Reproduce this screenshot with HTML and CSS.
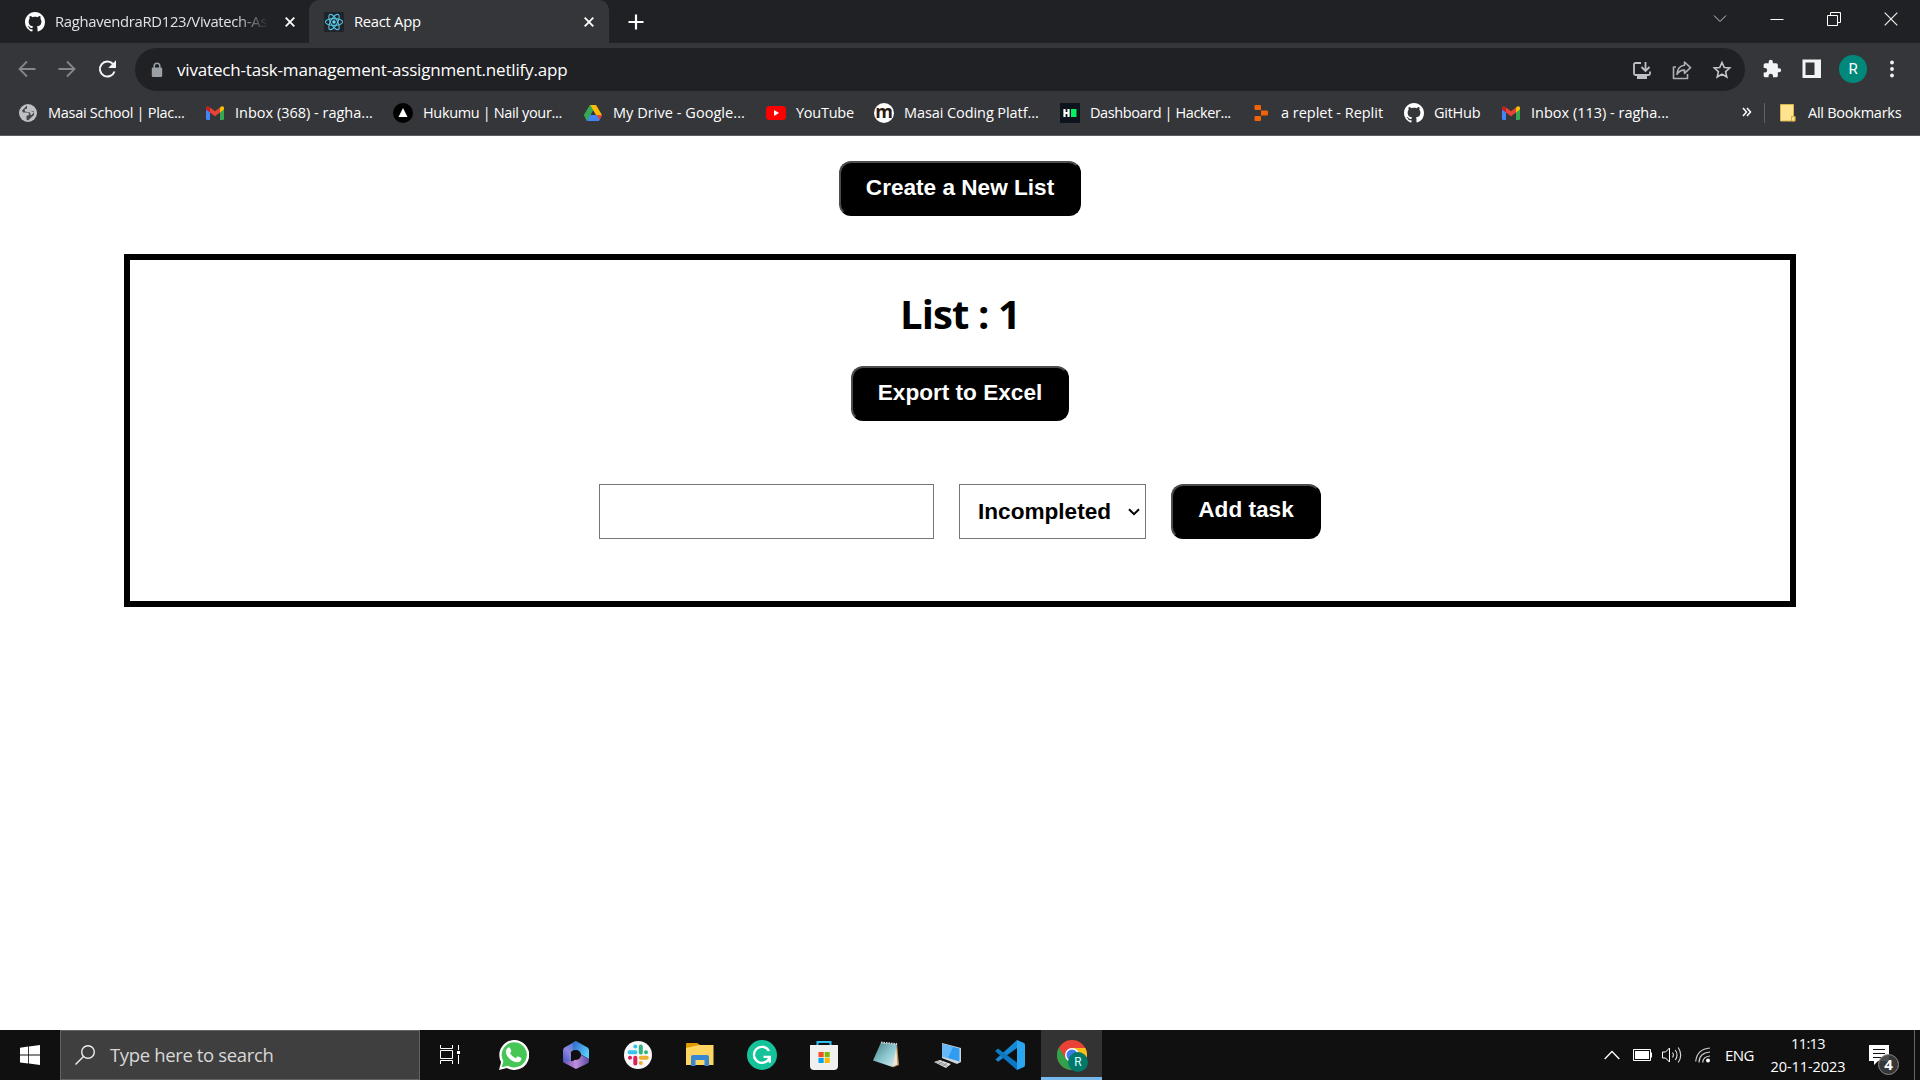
FILE: index.html
```html
<!DOCTYPE html>
<html lang="en">
<head>
<meta charset="utf-8">
<title>React App</title>
<link rel="stylesheet" href="styles.css">
</head>
<body>
<svg width="0" height="0" class="defs" aria-hidden="true">
  <symbol id="github" viewBox="0 0 16 16"><path fill="#fff" d="M8 0C3.58 0 0 3.58 0 8c0 3.54 2.29 6.53 5.47 7.59.4.07.55-.17.55-.38 0-.19-.01-.82-.01-1.49-2.01.37-2.53-.49-2.69-.94-.09-.23-.48-.94-.82-1.13-.28-.15-.68-.52-.01-.53.63-.01 1.08.58 1.23.82.72 1.21 1.87.87 2.33.66.07-.52.28-.87.51-1.07-1.78-.2-3.64-.89-3.64-3.95 0-.87.31-1.59.82-2.15-.08-.2-.36-1.02.08-2.12 0 0 .67-.21 2.2.82.64-.18 1.32-.27 2-.27s1.36.09 2 .27c1.53-1.04 2.2-.82 2.2-.82.44 1.1.16 1.92.08 2.12.51.56.82 1.27.82 2.15 0 3.07-1.87 3.75-3.65 3.95.29.25.54.73.54 1.48 0 1.07-.01 1.93-.01 2.2 0 .21.15.46.55.38A8.01 8.01 0 0 0 16 8c0-4.42-3.58-8-8-8z"/></symbol>
  <symbol id="gmail" viewBox="0 0 20 20"><path fill="#4285f4" d="M1 6l4 3v8H2.300Q1 17 1 15.700z"/><path fill="#34a853" d="M15 9l4-3v9.700Q19 17 17.700 17H15z"/><path fill="#fbbc04" d="M15 4.500l1.200-.9Q19 2.500 19 5v1.500L15 9.500z"/><path fill="#ea4335" d="M5 4.500l5 3.800 5-3.800v5L10 13.300 5 9.500z"/><path fill="#c5221f" d="M1 5Q1 2.500 3.800 3.600L5 4.500v5L1 6.500z"/></symbol>
  <symbol id="close" viewBox="0 0 12 12"><path d="M1.700 1.700l8.600 8.600m0-8.600l-8.600 8.600" stroke="#fff" stroke-width="1.800" fill="none"/></symbol>
</svg>

<header class="browser">
  <div class="tabs">
    <div class="tab">
      <svg class="i20"><use href="#github"/></svg>
      <span class="tab-title fade">RaghavendraRD123/Vivatech-As</span>
      <svg class="i12"><use href="#close"/></svg>
    </div>
    <div class="tab active">
      <svg class="i20" viewBox="0 0 20 20"><rect width="20" height="20" rx="1.500" fill="#20232a"/><g fill="none" stroke="#53c1de" stroke-width="1.100"><ellipse cx="10" cy="10" rx="8.600" ry="3.400"/><ellipse cx="10" cy="10" rx="8.600" ry="3.400" transform="rotate(60 10 10)"/><ellipse cx="10" cy="10" rx="8.600" ry="3.400" transform="rotate(120 10 10)"/></g><circle cx="10" cy="10" r="1.700" fill="#61dafb"/></svg>
      <span class="tab-title">React App</span>
      <svg class="i12"><use href="#close"/></svg>
    </div>
    <svg class="plus" viewBox="0 0 16 16"><path d="M8 .5v15M.5 8h15" stroke="#fff" stroke-width="2.200"/></svg>
    <div class="window-controls">
      <svg viewBox="0 0 14 14"><path d="M1 3.500l6 6 6-6" stroke="#ccc" fill="none"/></svg>
      <svg viewBox="0 0 14 14"><path d="M.5 7.500h13" stroke="#fff"/></svg>
      <svg viewBox="0 0 14 14"><path d="M.5 3.500h10v10H.5zM3.500 3V.5h10v10H11" stroke="#fff" fill="none"/></svg>
      <svg viewBox="0 0 14 14"><path d="M.7.700l12.600 12.600m0-12.600L.7 13.300" stroke="#eee" stroke-width="1.200"/></svg>
    </div>
  </div>

  <div class="toolbar">
    <div class="nav">
      <svg class="i20" viewBox="0 0 20 20"><path d="M18.500 10H2.500m7.500-7.500L2.500 10l7.500 7.500" stroke="#85878b" stroke-width="1.800" fill="none"/></svg>
      <svg class="i20" viewBox="0 0 20 20"><path d="M1.500 10h16m-7.500-7.500l7.500 7.500-7.500 7.500" stroke="#85878b" stroke-width="1.800" fill="none"/></svg>
      <svg class="i20" viewBox="0 0 20 20"><path d="M17.500 12.500A7.500 7.500 0 1 1 16 5" stroke="#f1f3f4" stroke-width="2" fill="none"/><path fill="#f1f3f4" d="M19 1.200v7.800h-7.800z"/></svg>
    </div>
    <div class="omnibox">
      <svg class="lock" viewBox="0 0 12 16"><rect y="5.500" x=".8" width="10.400" height="9.500" rx="1.200" fill="#9aa0a6"/><path d="M3.200 6V4a2.800 2.800 0 0 1 5.600 0v2" stroke="#9aa0a6" stroke-width="1.500" fill="none"/></svg>
      <span class="url">vivatech-task-management-assignment.netlify.app</span>
      <div class="omni-icons">
        <svg class="i20" viewBox="0 0 20 20"><g stroke="#bdc1c6" stroke-width="1.800" fill="none"><path d="M9 3H3.500Q2 3 2 4.500v9Q2 15 3.500 15h13q1.500 0 1.500-1.500V11.500"/><path d="M13.500 2v8.500M9.500 7l4 4 4-4"/></g><path fill="#bdc1c6" d="M5 15.500h10V19H5z"/></svg>
        <svg class="i20" viewBox="0 0 20 20"><g stroke="#aeb1b5" stroke-width="1.600" fill="none" stroke-linejoin="round"><path d="M4 7H1.500v11.500h14V14"/><path d="M12.500 2l6 5.700-6 5.600v-3.200q-5-.3-7.500 4.200.3-8 7.500-9z"/></g></svg>
        <svg class="i20" viewBox="0 0 20 20"><path d="M10 2.500l2.300 5 5.400.5-4.100 3.600 1.200 5.400-4.800-2.900L5.200 17l1.200-5.400L2.300 8l5.400-.5z" stroke="#c4c7ca" stroke-width="1.600" fill="none"/></svg>
      </div>
    </div>
    <div class="actions">
      <svg class="i20" viewBox="0 0 24 24"><path fill="#f1f3f4" d="M20.500 11H19V7a2 2 0 0 0-2-2h-4V3.500a2.500 2.500 0 0 0-5 0V5H4a2 2 0 0 0-2 2v3.800h1.500a2.700 2.700 0 0 1 0 5.400H2V20a2 2 0 0 0 2 2h3.800v-1.500a2.700 2.700 0 0 1 5.400 0V22H17a2 2 0 0 0 2-2v-4h1.500a2.500 2.500 0 0 0 0-5z"/></svg>
      <svg class="i20 panel" viewBox="0 0 20 20"><path fill="#f1f3f4" fill-rule="evenodd" d="M.5.500h18.500v18.500H.5zM3.500 3.500v12.500h9v-12.500z"/></svg>
      <span class="avatar">R</span>
      <svg class="dots" viewBox="0 0 4 18"><g fill="#f1f3f4"><circle cx="2" cy="2.500" r="1.900"/><circle cx="2" cy="9" r="1.900"/><circle cx="2" cy="15.500" r="1.900"/></g></svg>
    </div>
  </div>

  <nav class="bookmarks">
    <a class="bm b1"><svg class="i20" viewBox="0 0 20 20"><circle cx="10" cy="10" r="9" fill="#bdc1c6"/><path d="M9 2.500L4 7.500l1 2h5l1.500 2-3 1.500v3.500l1.500 1 6-5.500V8.500l-5-1-2-2z" fill="#45464a"/><path d="M6.500 6.500l4-1.500 1.500 2.500 4 2-3 3-1-3-5-1z" fill="#bdc1c6"/></svg><span>Masai School | Plac...</span></a>
    <a class="bm b2"><svg class="i20"><use href="#gmail"/></svg><span>Inbox (368) - ragha...</span></a>
    <a class="bm b3"><svg class="i20" viewBox="0 0 20 20"><circle cx="10" cy="10" r="10" fill="#000"/><path d="M10 5l4.500 9h-9z" fill="#fff"/></svg><span>Hukumu | Nail your...</span></a>
    <a class="bm b4"><svg class="i20" viewBox="0 0 20 20"><path fill="#34a853" d="M7 2h3l0 5.300L4 18 1 12z"/><path fill="#188038" d="M7 2h3v5.300z"/><path fill="#fbbc04" d="M7 2h6l6 10h-6z"/><path fill="#34a853" d="M7 2l3 5.300L4 18 1 12z"/><path fill="#4285f4" d="M7 12h12l-3 6H4z"/><path fill="#ea4335" d="M13.500 12H19l-2.500 5z"/></svg><span>My Drive - Google...</span></a>
    <a class="bm b5"><svg class="i20" viewBox="0 0 20 20"><rect y="3" width="20" height="14" rx="3.500" fill="#f00"/><path fill="#fff" d="M8 7l5 3-5 3z"/></svg><span>YouTube</span></a>
    <a class="bm b6"><span class="m-logo">m</span><span>Masai Coding Platf...</span></a>
    <a class="bm b7"><svg class="i20" viewBox="0 0 20 20"><path fill="#0e141e" d="M0 0h20v20H0z"/><path stroke="#fff" stroke-width="2.200" d="M4.500 6v8M8.500 6v8M4 10h5"/><path fill="#05f05f" d="M11 6h5.500v8H11z"/></svg><span>Dashboard | Hacker...</span></a>
    <a class="bm b8"><svg class="i20" viewBox="0 0 20 20"><path fill="#f26207" d="M4.500 2H9q1 0 1 1v4H4.500Q3.500 7 3.500 6V3q0-1 1-1zM10 7.500h6q1 0 1 1v3q0 1-1 1h-6zM4.500 13H10v4q0 1-1 1H4.500q-1 0-1-1v-3q0-1 1-1z"/></svg><span>a replet - Replit</span></a>
    <a class="bm b9"><svg class="i20"><use href="#github"/></svg><span>GitHub</span></a>
    <a class="bm b10"><svg class="i20"><use href="#gmail"/></svg><span>Inbox (113) - ragha...</span></a>
    <span class="more"><svg viewBox="0 0 10 10"><path d="M1 1l3.500 4L1 9M5 1l3.500 4L5 9" stroke="#fff" stroke-width="1.500" fill="none"/></svg></span>
    <a class="all"><svg class="i20" viewBox="0 0 20 20"><path fill="#ffe391" stroke="#d9b64c" d="M2.500 1.500h13v12h1.500v4.500H2.500z"/><path fill="#ffe391" stroke="#c9a227" stroke-width=".8" d="M13.500 18v-4.500h3.500V18z"/></svg><span>All Bookmarks</span></a>
  </nav>
</header>

<main class="page">
  <button class="btn create">Create a New List</button>
  <section class="list">
    <h1>List : 1</h1>
    <button class="btn export">Export to Excel</button>
    <div class="form">
      <input type="text" class="task">
      <div class="select">
        <select class="status"><option>Incompleted</option><option>Completed</option></select>
        <svg class="caret" viewBox="0 0 12 8"><path d="M1 1.200l5 5 5-5" stroke="#000" stroke-width="2" fill="none"/></svg>
      </div>
      <button class="btn add">Add task</button>
    </div>
  </section>
</main>

<footer class="taskbar">
  <div class="start"><svg class="i20" viewBox="0 0 20 20"><path fill="#fff" d="M0 2.700L8.200 1.500v8H0zM9 1.400L20 0v9.500H9zM0 10.500h8.200v8L0 17.400zM9 10.500h11V20L9 18.600z"/></svg></div>
  <div class="search"><svg class="i20" viewBox="0 0 20 20"><circle cx="13" cy="7" r="6.300" fill="none" stroke="#eee" stroke-width="1.400"/><path d="M8.500 11.500L.5 19.500" stroke="#eee" stroke-width="1.400"/></svg><span>Type here to search</span></div>
  <div class="view"><svg class="i20" viewBox="0 0 20 20"><path d="M.5 0v3.500h12V0M.5 5.500h12v8H.5zM.5 19v-3.500h12V19M18.500 0v5M18.500 10v9" stroke="#fff" fill="none"/><path fill="#fff" d="M17 6h3v3h-3z"/></svg></div>
  <div class="app"><svg viewBox="0 0 30 30"><path fill="#fff" d="M0 30l2.100-7.800A15 15 0 1 1 7.800 28z"/><path fill="#45c655" d="M2.700 27.300l1.700-6A12.600 12.600 0 1 1 8.800 25.700z"/><path fill="#fff" d="M9.200 7.500h1.600l1.600 3.600-1.300 2.200q2 3.800 5.700 5l1.900-2 3.700 1.800q0 4.200-4.200 4.200-7.200-.5-11-8.300-1.200-4.500 2-6.500z"/></svg></div>
  <div class="app"><svg viewBox="0 0 30 30"><defs><linearGradient id="o1" x1=".8" y1="0" x2="0" y2="1"><stop stop-color="#3f7fd0"/><stop offset=".5" stop-color="#8f86e0"/><stop offset="1" stop-color="#3e53ba"/></linearGradient><linearGradient id="o2" x2="1" y2=".6"><stop stop-color="#3465c5"/><stop offset="1" stop-color="#57cdfa"/></linearGradient><linearGradient id="o3" x2="1"><stop stop-color="#6b50ac"/><stop offset=".5" stop-color="#c08fe0"/><stop offset="1" stop-color="#5a48a0"/></linearGradient></defs><path fill="url(#o1)" d="M15 1L3.500 7.500Q2 8.500 2 10v12l8 1V12l6-5z"/><path fill="url(#o2)" d="M12 2.500l3-1.500 11.500 6.500Q28 8.500 28 10v9L12 10z"/><path fill="url(#o3)" d="M2 22l10-1 8-6 8 4v2.500q0 1-1.500 2L15 29 3.500 23z"/><circle cx="15" cy="15" r="5" fill="#101010"/></svg></div>
  <div class="app"><svg viewBox="0 0 30 30"><circle cx="15" cy="15" r="14" fill="#f8f8f8"/><g fill="none" stroke-width="4" stroke-linecap="round"><path d="M12.300 6.500h0M6.500 12.200h6" stroke="#36c5f0"/><path d="M23 12.200h0M17.800 6.500v6" stroke="#2eb67d"/><path d="M17.800 23h0M17.800 17.800h6" stroke="#ecb22e"/><path d="M7 17.800h0M12.300 17.800v5.700" stroke="#e01e5a"/></g></svg></div>
  <div class="app"><svg viewBox="0 0 30 30"><path fill="#e19b00" d="M1 4q0-1 1-1h10l3 2v4H1z"/><path fill="#ffd562" d="M1 8l13-3h14.500v20H1z"/><path fill="#3688d4" d="M6 26V17q0-2 2-2h14q2 0 2 2v9h-4.500v-6h-9v6z"/></svg></div>
  <div class="app"><svg viewBox="0 0 30 30"><circle cx="15" cy="15" r="15" fill="#15c39a"/><path d="M22 11A8 8 0 1 0 22.500 17.500M16.500 16.800h6.300v6" stroke="#fff" stroke-width="2.300" fill="none"/></svg></div>
  <div class="app"><svg viewBox="0 0 30 30"><path d="M8.500 6V2h13v4" stroke="#32bff0" stroke-width="2" fill="none"/><path fill="#f0f0f0" d="M1 5h28v21q0 4-4 4H5q-4 0-4-4z"/><path fill="#f25022" d="M9.500 12h5.200v5.200H9.500z"/><path fill="#7fba00" d="M15.700 12h5v5.200h-5z"/><path fill="#00a4ef" d="M9.500 18h5.200v5H9.500z"/><path fill="#ffb900" d="M15.700 18h5v5h-5z"/></svg></div>
  <div class="app"><svg viewBox="0 0 30 30"><defs><linearGradient id="n" x2="1" y2="1"><stop stop-color="#477c84"/><stop offset=".55" stop-color="#8ec9d2"/><stop offset="1" stop-color="#dcecef"/></linearGradient></defs><path fill="#b08a52" d="M26 3l2 22-6 2.500z"/><path fill="#ece5d5" d="M25 3l1.500 21.500L21 27z"/><path fill="url(#n)" d="M10 2.500L26 4l-4.500 23L2 20.500z"/><path stroke="#d6dada" stroke-width="1.800" stroke-dasharray="1.500 1" d="M10 2.500L26 4"/></svg></div>
  <div class="app"><svg viewBox="0 0 30 30"><path fill="#cfd4d8" d="M9 3l19 5v14l-4 2-15-6z"/><path fill="#2f9cf2" d="M9.500 4l17 4.500v13l-17-5z"/><path fill="#65b9fb" d="M9.500 4L20 7 15 18l-5.500-1.500z"/><path fill="#e3e5e7" d="M1 22l6-2 11 4-5 4z"/><path stroke="#777" stroke-width=".6" d="M4 21l11 4.500M2.500 22L14 26.500M6 24l4-2.500M10 25.500l4-2.500"/></svg></div>
  <div class="app"><svg viewBox="0 0 30 30"><path fill="#1688d4" d="M.5 19.500L22 0v8L3 21.800z"/><path fill="#0b78c1" d="M.5 10.500L3 8.500l19 14V30L.5 11.500z"/><path fill="#2da4ef" d="M22 0l7 3q1 .5 1 2v20q0 1.500-1 2l-7 3z"/></svg></div>
  <div class="app current"><svg viewBox="0 0 30 30"><circle cx="15" cy="15" r="15" fill="#ea4335"/><path fill="#32a14c" d="M2 7.500A15 15 0 0 0 15 30l6.500-11.500H8.500z"/><path fill="#fbc116" d="M15 8h13.300A15 15 0 0 1 15 30l6.500-11.500z"/><circle cx="15" cy="15" r="7" fill="#fff"/><circle cx="15" cy="15" r="5.500" fill="#3b7ded"/></svg><span class="profile">R</span></div>
  <div class="tray">
    <svg class="t-up" viewBox="0 0 16 10"><path d="M.7 9L8 1.500 15.300 9" stroke="#fff" stroke-width="1.300" fill="none"/></svg>
    <svg class="t-bat" viewBox="0 0 20 12"><path d="M.5.500h17v11H.5zM18.500 3.500v5" stroke="#fff" fill="none"/><path fill="#fff" d="M2 2h14v8H2z"/></svg>
    <svg class="t-vol" viewBox="0 0 20 18"><path d="M.5 6v6h3l4 4V2l-4 4z" stroke="#fff" fill="none"/><path d="M10.500 6.500q1.800 2.500 0 5M13.300 4q3.500 5 0 10M16.200 1.500q5 7.500 0 15" stroke="#ddd" fill="none" stroke-width="1.100"/></svg>
    <svg class="t-wifi" viewBox="0 0 16 16"><g fill="none" stroke="#ccc" stroke-width="1.200"><path d="M.7 14.500Q2 2 15 1M4 15.500Q4 6 15 5M7.700 15.500Q8 9.500 15 9"/></g><circle cx="13" cy="13.500" r="2" fill="#fff"/></svg>
    <span class="lang">ENG</span>
    <div class="clock"><span class="time">11:13</span><span>20-11-2023</span></div>
    <div class="notice"><svg viewBox="0 0 20 20"><path fill="#fff" d="M0 0h20v16H9l-4 4v-4H0z"/><path d="M4 4.500h12M4 8.500h12M4 12.500h8" stroke="#101010"/></svg><span class="count">4</span></div>
    <i class="peek"></i>
  </div>
</footer>
</body>
</html>
```
FILE: styles.css
```css
* { box-sizing: border-box; }
body {
  margin: 0; width: 1920px; height: 1080px; overflow: hidden;
  display: flex; flex-direction: column; background: #fff;
  font-family: "Open Sans", "Noto Sans", sans-serif;
}
svg { flex: none; display: block; }
.defs { position: absolute; }
.i20 { width: 20px; height: 20px; }
.i12 { width: 12px; height: 12px; }

.browser { height: 136px; background: #35363a; color: #fff; border-bottom: 1px solid #5c5d61; font-size: 15px; white-space: nowrap; }
.tabs { height: 43px; display: flex; align-items: center; background: #202124; }
.tab { width: 309px; height: 43px; padding: 0 13px 0 25px; display: flex; align-items: center; gap: 10px; }
.tab.active { width: 300px; padding: 0 14px 0 15px; background: #35363a; border-radius: 10px 10px 0 0; }
.tab-title { flex: 1; overflow: hidden; letter-spacing: -.3px; font-size: 14.800px; padding-bottom: 2px; }
.fade { flex: 0 0 214px; margin-right: 5px; color: #dfe1e5; -webkit-mask-image: linear-gradient(90deg, #000 84%, transparent); mask-image: linear-gradient(90deg, #000 84%, transparent); }
.plus { width: 16px; height: 16px; margin-left: 19px; }
.window-controls { margin-left: auto; display: flex; gap: 43px; padding: 0 22px 5px 0; }
.window-controls svg { width: 14px; height: 14px; }

.toolbar { height: 48px; padding-top: 5px; display: flex; }
.nav { width: 135px; height: 43px; padding: 0 0 2px 17px; display: flex; align-items: center; gap: 20px; }
.omnibox { width: 1610px; height: 43px; padding: 0 13px 0 16px; display: flex; align-items: center; background: #202124; border-radius: 22px; }
.lock { width: 12px; height: 16px; }
.url { margin-left: 14px; font-size: 17px; letter-spacing: -.18px; }
.omni-icons { margin-left: auto; display: flex; gap: 20px; }
.actions { flex: 1; height: 43px; padding: 0 0 2px 17px; display: flex; align-items: center; }
.panel { margin-left: 20px; }
.avatar { width: 28px; height: 28px; margin: 0 23px 0 17px; border-radius: 50%; background: #00897b; font: 15px/28px Roboto, sans-serif; text-align: center; }
.dots { width: 4px; height: 18px; }

.bookmarks { height: 44px; padding-left: 18px; display: flex; align-items: center; font-size: 14.500px; }
.bm, .all { display: flex; align-items: center; gap: 10px; }
.bm span:last-child, .all span { padding-bottom: 2px; }
.b1 { width: 187px; letter-spacing: -.28px; }
.b2 { width: 188px; letter-spacing: 0; }
.b3 { width: 190px; letter-spacing: -.35px; }
.b4 { width: 183px; letter-spacing: .05px; }
.b5 { width: 108px; letter-spacing: -.25px; }
.b6 { width: 186px; letter-spacing: -.08px; }
.b7 { width: 191px; letter-spacing: -.4px; }
.b8 { width: 153px; letter-spacing: -.02px; }
.b9 { width: 97px; letter-spacing: -.25px; }
.b10 { width: 241px; letter-spacing: 0; }
.m-logo { width: 20px; height: 20px; border-radius: 50%; background: #fff; color: #2b1a10; font: bold 18px/17px "Open Sans", sans-serif; text-align: center; }
.more { width: 23px; height: 20px; border-right: 1px solid #606266; padding-top: 4px; }
.more svg { width: 10px; height: 10px; }
.all { margin-left: 13px; letter-spacing: -.25px; }

.page { height: 894px; display: flex; flex-direction: column; align-items: center; padding-top: 25px; }
.btn { height: 55px; padding: 0 0 1px; border: 2px outset #000; border-color: #4c4c4c #000 #000 #4c4c4c; border-radius: 12px; background: #000; color: #fff; font: bold 22.600px "Liberation Sans", Arial, sans-serif; white-space: nowrap; }
.create { width: 242px; }
.export { width: 218px; }
.btn.add { width: 150px; padding-bottom: 3px; }
.list { width: 1672px; height: 353px; margin-top: 38px; border: 6px solid #000; display: flex; flex-direction: column; align-items: center; padding-top: 27px; }
.list h1 { margin: 0 0 25px; font-size: 40px; line-height: 54px; letter-spacing: -.9px; }
.form { margin-top: 63px; display: flex; gap: 25px; }
.task { width: 335px; height: 55px; border: 1px solid #767676; border-radius: 0; }
.select { position: relative; }
.status { width: 187px; height: 55px; padding: 0 0 0 18px; appearance: none; border: 1px solid #767676; border-radius: 0; background: #fff; color: #000; font: bold 22.600px "Liberation Sans", Arial, sans-serif; }
.caret { position: absolute; right: 6px; top: 24px; width: 12px; height: 8px; pointer-events: none; }

.taskbar { height: 50px; display: flex; background: #101010; color: #fff; white-space: nowrap; }
.start { width: 60px; display: grid; place-items: center; }
.search { width: 360px; padding-left: 14px; display: flex; align-items: center; gap: 15px; background: #3f3f3f; border: 1px solid #636363; color: #d8d8d8; font-size: 18.500px; letter-spacing: -.36px; }
.search span { padding-bottom: 2px; }
.view { width: 63px; padding: 15px 0 0 20px; }
.app { width: 62px; position: relative; display: grid; place-items: center; }
.app > svg { width: 30px; height: 30px; }
.current { width: 61px; background: #333; border-bottom: 3px solid #76b9ed; padding-top: 3px; }
.profile { position: absolute; left: 27px; top: 22px; width: 20px; height: 20px; border-radius: 50%; background: #00796b; color: #dff; font: 12px/20px Roboto, sans-serif; text-align: center; }
.tray { margin-left: auto; display: flex; align-items: center; font-size: 15px; }
.t-up { width: 16px; height: 10px; }
.t-bat { width: 20px; height: 12px; margin-left: 13px; }
.t-vol { width: 20px; height: 18px; margin-left: 9px; }
.t-wifi { width: 16px; height: 16px; margin-left: 13px; }
.lang { width: 29px; margin-left: 14px; letter-spacing: -.6px; }
.clock { width: 76px; margin-left: 16px; display: flex; flex-direction: column; align-items: center; line-height: 23px; font-size: 14.500px; letter-spacing: -.05px; }
.time { letter-spacing: -.6px; }
.notice { width: 20px; height: 20px; margin-left: 23px; position: relative; }
.notice svg { width: 20px; height: 20px; }
.count { position: absolute; left: 9px; top: 9px; width: 21px; height: 21px; border-radius: 50%; border: 1px solid #888; background: #3c3c3ce6; font: bold 15px/19px "Open Sans", sans-serif; text-align: center; }
.peek { width: 1px; height: 50px; margin: 0 5px 0 25px; background: #666; }
```
